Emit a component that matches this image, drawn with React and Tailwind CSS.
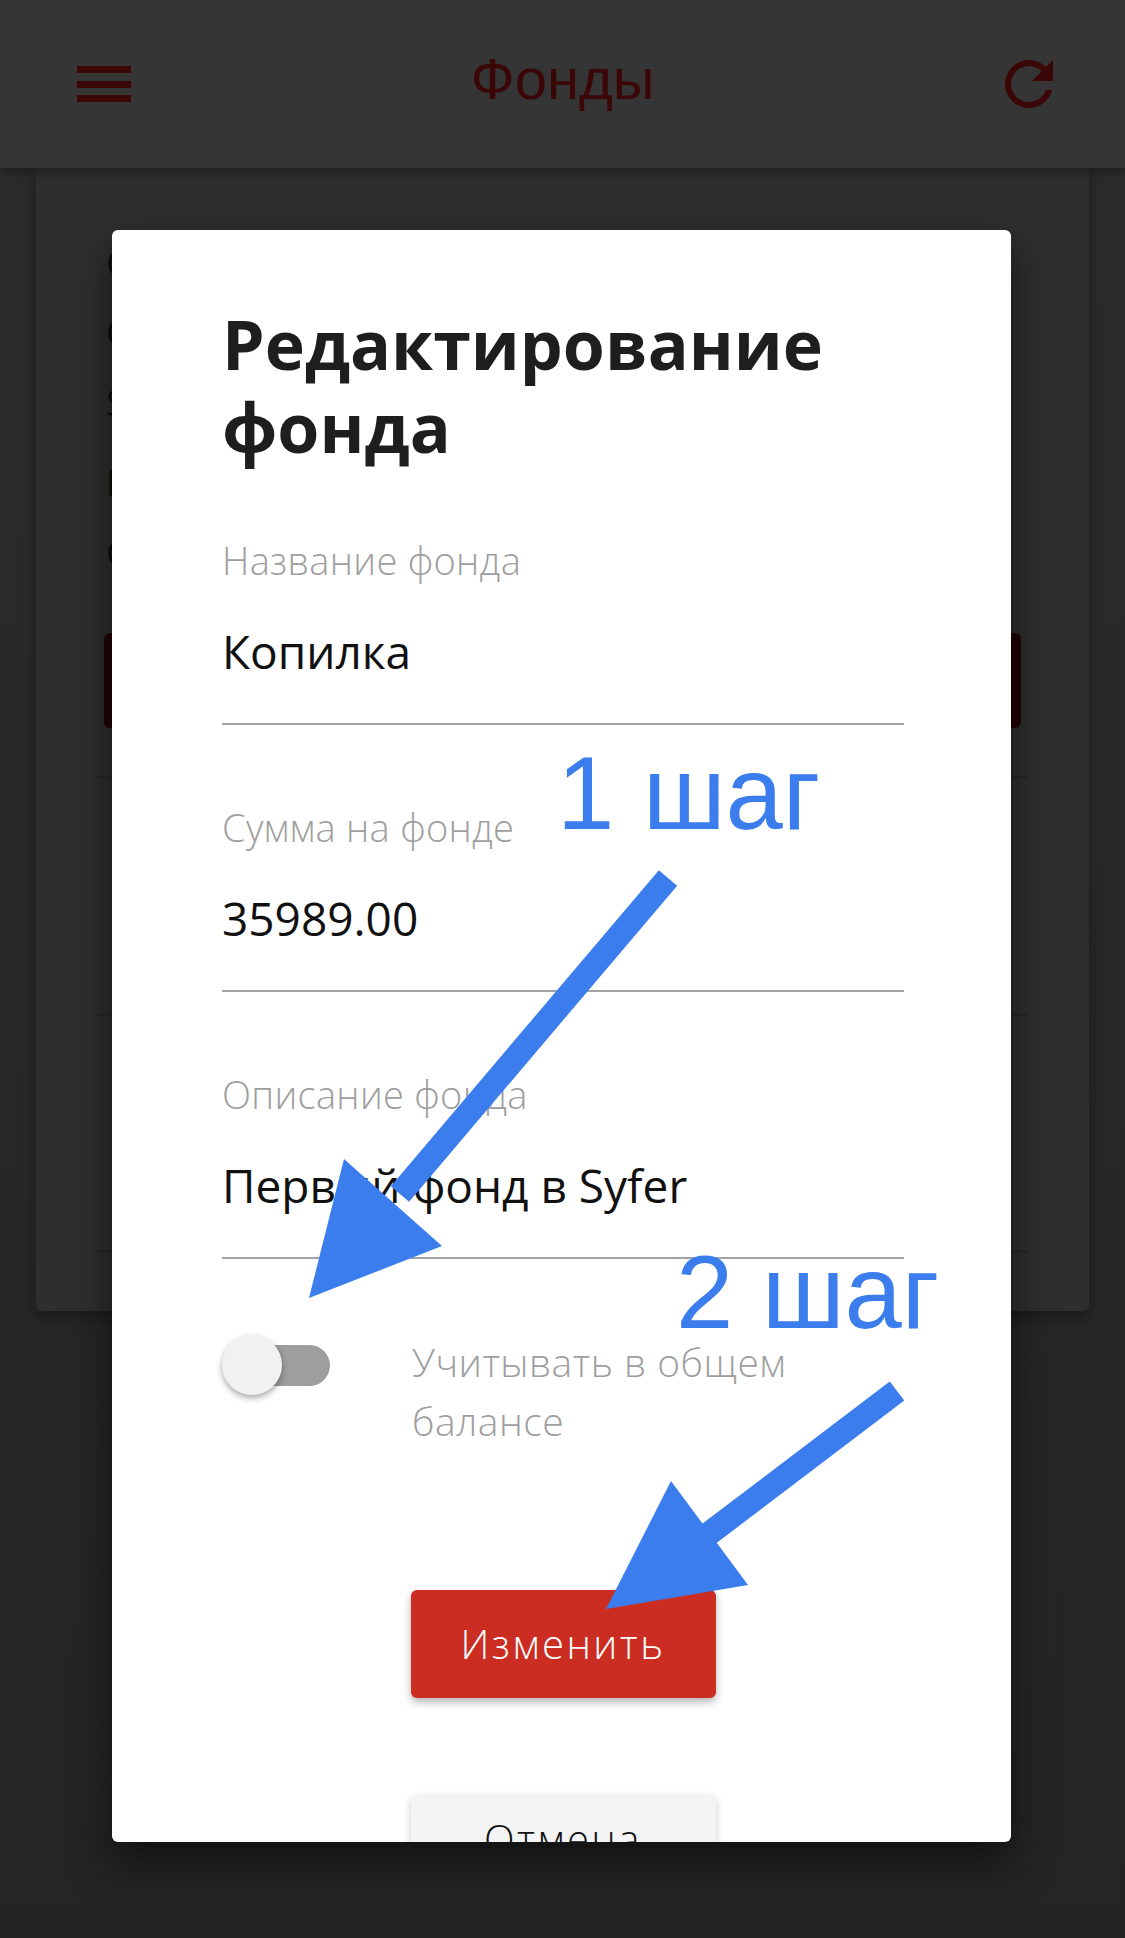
import React from 'react';

const BLUE = '#3b7ded';

const Field = ({ label, value, first }) => (
    <div className={first ? 'mt-[70px]' : 'mt-[80px]'}>
        <div className="text-[38px] leading-[44px] font-light tracking-[0.3px] text-[#9e9e9e]">{label}</div>
        <div className="mt-[41px] pb-[44px] border-b-2 border-[#a3a3a3] text-[46px] leading-[56px] text-[#111]">
            {value}
        </div>
    </div>
);

const Header = () => (
    <div className="relative z-10 h-[168px] flex items-center bg-[#353535] shadow-[0_4px_10px_rgba(0,0,0,0.35)]">
        {/* hamburger */}
        <div className="w-[250px] pl-[77px]">
            <div className="w-[54px] flex flex-col gap-[7.5px]">
                <div className="h-[7px] bg-[#3a0606]" />
                <div className="h-[7px] bg-[#3a0606]" />
                <div className="h-[7px] bg-[#3a0606]" />
            </div>
        </div>
        <div className="flex-1 text-center text-[58px] leading-none text-[#3a0606] -mt-[10px] font-['Liberation_Sans',Arial,sans-serif]">
            Фонды
        </div>
        <div className="w-[250px] flex justify-end pr-[60px]">
            <svg width="72" height="72" viewBox="0 0 24 24" fill="#3a0606">
                <path d="M17.65 6.35C16.2 4.9 14.21 4 12 4c-4.42 0-7.99 3.58-7.99 8s3.57 8 7.99 8c3.73 0 6.84-2.55 7.730-6h-2.08c-.82 2.33-3.04 4-5.65 4-3.31 0-6-2.690-6-6s2.69-6 6-6c1.66 0 3.14.69 4.22 1.78L13 11h7V4l-2.35 2.35z" />
            </svg>
        </div>
    </div>
);

// card behind the dialog, mostly hidden
const FundCard = () => (
    <div className="mx-[36px] h-[1143px] bg-[#2e2e2e] rounded-b-[6px] shadow-[0_6px_14px_rgba(0,0,0,0.35)] pt-[60px] px-[70px]">
        <div className="text-[36px] leading-[70px] text-[#0c0c0c]">
            <div>Сумма на фонде: 35989.00</div>
            <div>Описание: Первый фонд</div>
            <div>Syfer</div>
            <div className="mt-[10px]">Показывать в балансе</div>
            <div>Создан 12.03.2019</div>
        </div>
        <div className="mt-[45px] -mx-[2px] h-[95px] rounded-[6px] bg-[#200303]" />
        <div className="mt-[48px] -mx-[10px] h-[3px] bg-[#272727]" />
        <div className="mt-[234px] -mx-[10px] h-[3px] bg-[#272727]" />
        <div className="mt-[234px] -mx-[10px] h-[3px] bg-[#272727]" />
    </div>
);

const EditDialog = () => (
    <div className="absolute left-[112px] top-[230px] w-[899px] h-[1612px] overflow-hidden bg-white rounded-[6px] shadow-[0_18px_40px_rgba(0,0,0,0.55)] pt-[72px] pl-[110px] pr-[107px] font-['Open_Sans',sans-serif]">
        <h2 className="text-[68px] leading-[83px] font-bold text-[#1e1e1e]">
            Редактирование<br />фонда
        </h2>

        <Field first label="Название фонда" value="Копилка" />
        <Field label="Сумма на фонде" value="35989.00" />
        <Field label="Описание фонда" value="Первый фонд в Syfer" />

        <div className="mt-[73px] flex items-start">
            <div className="relative mt-[3px] w-[108px] h-[60px] shrink-0">
                <div className="absolute left-[16px] right-0 top-[10px] h-[41px] rounded-full bg-[#9e9e9e]" />
                <div className="absolute left-0 top-0 w-[60px] h-[60px] rounded-full bg-[#f1f1f1] shadow-[0_3px_6px_rgba(0,0,0,0.35)]" />
            </div>
            <div className="ml-[82px] text-[39px] leading-[59px] font-light tracking-[0.5px] text-[#9e9e9e]">
                Учитывать в общем<br />балансе
            </div>
        </div>

        <div className="mt-[140px] flex flex-col items-center">
            <button className="w-[305px] h-[108px] rounded-[6px] bg-[#cb2d22] text-white text-[40px] font-light tracking-[2.5px] shadow-[0_4px_8px_rgba(0,0,0,0.3)]">
                Изменить
            </button>
            <button className="mt-[96px] w-[305px] h-[108px] pb-[18px] rounded-[6px] bg-[#f4f4f4] text-[#111] text-[40px] font-light tracking-[2.5px] shadow-[0_4px_8px_rgba(0,0,0,0.2)]">
                Отмена
            </button>
        </div>
    </div>
);

const Annotations = () => (
    <>
        <svg className="absolute inset-0 pointer-events-none" width="1125" height="1938" viewBox="0 0 1125 1938">
            <line x1="668" y1="878" x2="400" y2="1194" stroke={BLUE} strokeWidth="24" />
            <polygon points="309,1298 344,1159 442,1246" fill={BLUE} />
            <line x1="897" y1="1391" x2="702" y2="1539" stroke={BLUE} strokeWidth="24" />
            <polygon points="606,1609 671,1481 748,1585" fill={BLUE} />
        </svg>
        <div className="absolute left-[557px] top-[742px] text-[103px] leading-none text-[#3b7ded] font-['Liberation_Sans',Arial,sans-serif]">
            1 шаг
        </div>
        <div className="absolute left-[676px] top-[1241px] text-[103px] leading-none text-[#3b7ded] font-['Liberation_Sans',Arial,sans-serif]">
            2 шаг
        </div>
    </>
);

export default function App() {
    return (
        <div className="relative w-[1125px] h-[1938px] overflow-hidden bg-linear-to-b from-[#2c2c2c] to-[#242424] font-['Open_Sans',sans-serif]">
            <Header />
            <FundCard />
            <EditDialog />
            <Annotations />
        </div>
    );
}
